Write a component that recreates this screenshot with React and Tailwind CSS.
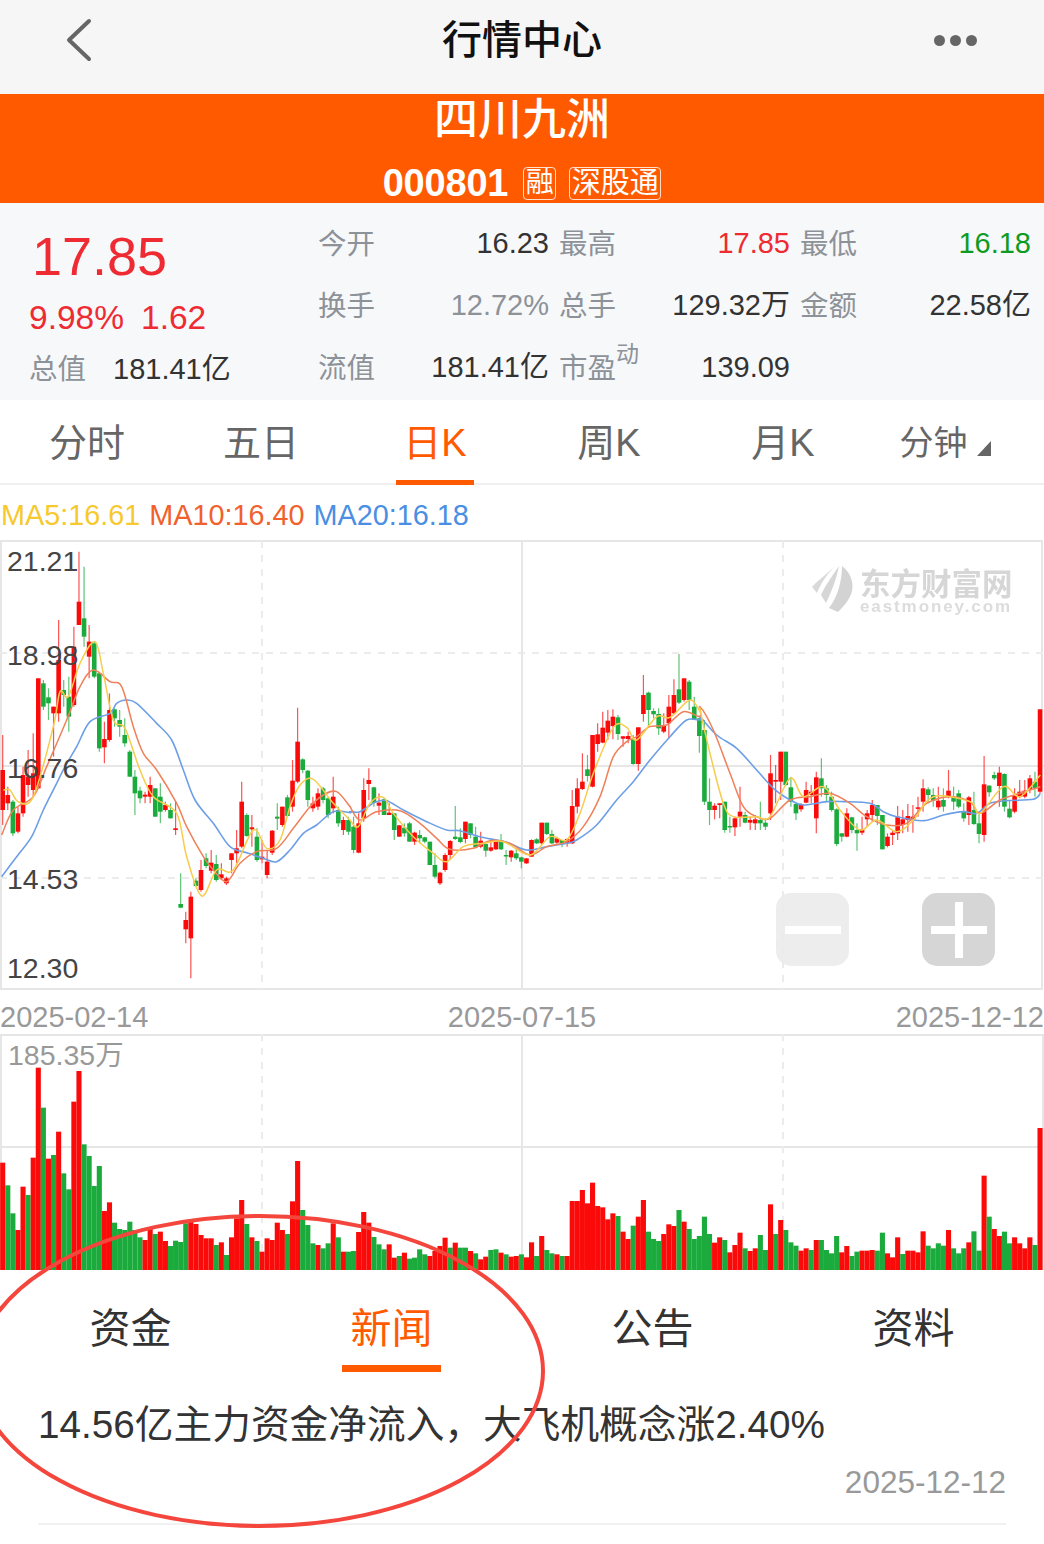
import React from 'react';

const FONT = '"Liberation Sans", "Noto Sans CJK SC", sans-serif';

// candles as [high, bodyTop, bodyBottom, low, up] read off the chart, in zoomed (3x) coordinates
const candlesA = [
  [585,690,810,855,1],[740,765,790,810,1],[780,785,880,888,0],[800,820,875,880,1],[680,705,820,830,1],[630,710,735,770,1],[580,700,750,770,1],[415,415,745,745,1],
  [420,430,500,510,0],[445,472,490,540,0],[500,500,520,650,1],[240,360,520,545,1],[420,450,465,500,0],[410,470,530,575,0],[260,320,495,500,1],[35,185,255,255,1],
  [80,235,290,320,0],[255,305,350,415,1],[305,310,410,415,0],[395,400,625,635,0],[545,597,622,670,1],[460,510,600,605,1],[505,508,535,560,0],[510,540,560,590,0],
  [535,585,610,620,0],[630,635,710,710,0],[690,710,760,825,0],[740,752,775,790,0],[755,764,770,790,1],[710,735,770,790,1],[745,745,830,830,0],[730,770,815,850,0],
  [785,795,810,815,1],[790,810,835,835,0],[785,865,870,885,1],[1000,1092,1103,1105,0],[1115,1140,1168,1210,1],[1055,1070,1195,1315,1],[1015,1022,1038,1040,0],[960,990,1050,1055,1],
  [940,955,978,985,0],[930,968,992,1000,1],[945,972,1020,1025,0],[970,1003,1015,1020,1],[1010,1015,1030,1035,1],[940,940,960,1000,1],[870,925,940,970,1],[725,785,920,925,1],
  [820,825,888,890,0],[825,862,868,920,1],[865,890,960,965,0],[900,950,958,970,1],[930,965,1005,1015,1],[870,872,938,945,1],[790,830,836,870,0],[800,800,855,860,1],
  [765,772,828,830,0],[660,722,800,815,1],[503,605,725,730,1],[655,658,690,700,0],[690,692,780,800,0],[770,790,805,815,1],[745,760,800,810,1],[740,745,780,790,0],
  [770,775,825,835,0],[710,770,805,820,1],[800,810,850,860,0],[830,840,870,885,1],[830,840,875,885,0],
];
const candlesB = [
  [530,560,630,640,0],[520,550,638,640,1],[415,450,535,545,1],[385,420,432,480,1],[440,442,488,500,0],[460,488,497,525,1],[475,478,525,525,0],[490,518,525,525,1],
  [520,520,570,600,0],[555,556,590,590,1],[550,563,580,590,0],[545,550,605,605,0],[575,578,605,615,1],[570,585,595,610,0],[590,592,605,610,0],[605,605,675,675,0],
  [640,675,710,715,0],[695,698,730,735,1],[640,645,690,695,1],[600,603,645,660,1],[498,590,597,600,0],[565,592,606,610,0],[545,545,597,610,1],[550,550,585,595,0],
  [560,590,622,625,0],[575,602,620,625,1],[610,612,632,650,0],[600,622,632,635,1],[600,602,628,630,1],[582,602,628,630,0],[630,645,648,675,0],[630,632,652,665,1],
  [625,640,655,660,0],[650,652,665,685,0],[655,655,670,672,1],[598,600,650,650,1],[595,598,610,612,0],[548,548,610,615,1],[548,548,582,585,0],[570,582,610,612,0],
  [590,595,608,615,1],[600,600,612,622,0],[595,597,610,620,1],[450,498,610,612,1],[415,445,500,520,1],[340,425,447,450,1],[345,388,408,425,0],[285,285,440,442,1],
  [250,283,312,335,1],[215,263,308,310,1],[210,242,278,300,1],[208,230,258,298,1],[225,232,282,300,0],[288,289,296,320,1],[275,288,297,310,1],[285,298,372,374,0],
  [262,262,372,392,1],[105,165,222,245,1],[155,158,210,260,0],[205,213,223,235,0],[205,222,265,285,0],[220,255,275,280,1],[165,200,250,295,1],[118,165,220,225,1],
  [42,148,188,192,0],[115,115,180,185,1],[120,125,180,210,0],[170,200,240,240,0],[235,235,288,338,0],
];
const candlesC = [
  [540,570,785,795,0],[715,785,810,855,0],[790,797,810,838,1],[790,790,795,835,1],[785,785,870,878,0],[830,858,862,878,0],[830,835,862,888,1],[740,815,830,860,1],
  [815,825,848,850,0],[830,840,848,870,1],[825,838,850,870,1],[785,840,850,870,0],[835,848,860,870,0],[645,700,820,840,1],[675,720,725,790,1],[635,635,725,780,1],
  [635,635,735,738,0],[710,742,785,800,0],[790,792,820,840,0],[790,792,808,815,1],[725,750,788,790,1],[735,755,765,790,1],[695,712,835,880,1],[655,715,745,770,0],
  [735,745,765,785,0],[755,770,810,815,0],[805,808,912,918,0],[880,880,890,905,0],[805,820,890,892,1],[830,832,870,880,0],[850,870,880,932,0],[830,868,878,885,1],
  [810,820,838,860,1],[780,795,825,845,1],[795,795,828,855,0],[825,825,928,928,0],[880,890,918,922,1],[870,878,885,915,1],[798,830,880,900,1],[810,838,855,880,1],
  [792,828,840,875,1],[795,830,840,878,1],[770,802,806,830,1],[718,745,785,815,1],[742,748,765,790,0],[745,765,782,800,0],[740,782,802,810,1],[745,780,800,815,0],
  [690,752,770,775,1],[740,772,785,810,0],[750,760,800,805,0],[790,815,835,845,0],[768,772,825,855,1],[755,810,852,855,0],[815,850,882,910,0],[648,733,885,905,1],
  [735,737,757,770,0],[695,705,715,720,0],[680,698,738,800,1],[700,702,800,815,0],[780,806,832,835,0],[745,768,815,820,1],[720,755,770,775,1],[720,752,770,775,1],
  [705,715,750,760,1],[695,725,745,770,0],[508,508,755,760,1],
];

const toY = (off) => (c) => c.slice(0, 4).map((v) => off + v / 3).concat(c[4]);
const candles = [...candlesA.map(toY(540)), ...candlesB.map(toY(640)), ...candlesC.map(toY(540))];

// volume bar tops, red positive and green negative
const volA = [398,-466,-550,600,470,-495,383,113,-233,386,-375,305,-430,-478,215,123,-343,-378,-468,-408,543,517,-578,-597,-600,-575,-600,-622,630,597,-612,605,633,-648,-632,-636,-580,575,582,615,625,625,-645,637,-675,622,565,510,-582,622,-633,665,625,630,578,600,-612,514,393,-540,-585,-640,645,-655,-640,580,-622,665,-665];
const volB = [-155,98,38,70,-113,-135,-150,135,175,-170,160,-178,-175,-150,-165,170,155,140,115,-145,130,-145,-145,155,-162,180,172,-152,-150,160,-165,172,170];
const volC = [-373,382,337,-378,318,-360,-370,373,-378,378,213,213,180,220,158,228,232,268,250,-258,305,327,-287,260,210,-305,-327,-333,312,283,288,-240,275,-297,-327,-318,-260,-312,338,322,-330,367,345,308,-355,363,355,-315,-360,223,-312,270,-300,-337,-347,362,355,-360,330,-330,-360,-370,-318,367,348,-378,-365,362,362,360,-362,-308,370,382,322,-372,362,362,367,304,-347,-355,-340,-347,300,-355,-370,-355,337,-304,-362,137,-260,297,318,-305,-340,322,340,355,322,-345];
const vol = [
  ...volA.map((v) => [(720 - Math.abs(v)) / 3, v > 0]),
  ...volB.map((v) => [(212 - Math.abs(v)) / 3, v > 0]),
  ...volC.map((v) => [(420 - Math.abs(v)) / 3, v > 0]),
  [142, true],
];

const lineParts = {
  ma20: [
    [0, 540, [5,1010,50,950,95,890,130,810,165,740,195,680,230,620,270,545,330,520,350,490,380,480,410,490,470,550,515,600,550,690,585,780,640,850,690,920,740,938,790,955,830,965,870,930,910,880,950,855,1000,815,1050,818]],
    [350, 640, [0,515,30,515,75,487,110,482,160,510,230,545,290,570,330,572,390,590,470,607,530,630,590,620,650,610,680,600,740,555,800,480,850,425,900,360,960,290,1010,240,1050,240]],
    [700, 540, [0,530,50,585,110,625,170,690,220,745,270,780,310,795,380,785,430,785,510,790,550,815,590,830,670,842,730,825,790,815,830,820,870,790,920,782,1000,778,1021,760]],
  ],
  ma10: [
    [0, 540, [5,885,40,810,100,770,140,680,200,540,240,440,280,390,330,425,365,440,400,560,430,640,470,690,530,790,560,860,610,950,640,990,680,1025,720,970,770,935,830,925,880,865,930,800,970,765,1010,755,1050,800]],
    [350, 640, [0,500,30,540,80,515,150,512,210,550,260,595,300,628,370,625,420,602,480,610,540,645,590,620,650,605,700,560,750,470,790,350,830,305,860,290,900,260,950,255,1000,215,1050,230]],
    [700, 540, [0,500,40,570,90,700,130,800,170,830,210,835,270,780,330,770,390,760,450,790,500,830,560,855,620,850,680,790,750,770,810,785,840,820,900,780,960,760,1021,740]],
  ],
  ma5: [
    [0, 540, [10,750,30,750,55,785,100,770,160,560,180,455,205,470,240,370,285,305,310,400,340,540,375,565,420,690,460,770,530,820,560,950,605,1068,650,990,700,990,760,870,800,925,840,900,870,800,900,735,940,718,1000,790,1050,840]],
    [350, 640, [0,540,25,560,60,490,100,472,130,520,190,590,250,640,290,665,340,620,400,610,460,605,540,645,600,590,650,600,690,520,730,400,790,262,830,262,860,300,920,230,960,232,1020,180,1050,215]],
    [700, 540, [0,510,30,640,70,790,100,830,170,830,210,830,270,715,310,770,370,740,420,810,480,870,530,840,590,875,640,840,700,770,810,785,840,820,910,740,960,770,1021,705]],
  ],
};

// smooth line through the points (catmull-rom to bezier)
function smoothPath(parts) {
  const pts = [];
  parts.forEach(([ox, oy, arr]) => {
    for (let i = 0; i < arr.length; i += 2) pts.push([ox + arr[i] / 3, oy + arr[i + 1] / 3]);
  });
  let d = `M${pts[0][0]} ${pts[0][1]}`;
  for (let i = 0; i < pts.length - 1; i++) {
    const p0 = pts[i - 1] || pts[i];
    const p1 = pts[i];
    const p2 = pts[i + 1];
    const p3 = pts[i + 2] || p2;
    d += `C${p1[0] + (p2[0] - p0[0]) / 6} ${p1[1] + (p2[1] - p0[1]) / 6} ${p2[0] - (p3[0] - p1[0]) / 6} ${p2[1] - (p3[1] - p1[1]) / 6} ${p2[0]} ${p2[1]}`;
  }
  return d;
}

const RED = '#fb0a0a';
const GREEN = '#1aab3c';
const barX = (i) => 2.7 + 5.085 * i;

function KChart() {
  return (
    <div className="relative h-[450px]">
      <svg className="block w-full h-full blur-[0.5px]" viewBox="0 540 1044 450">
        <rect x="1" y="541" width="1041" height="448" fill="none" stroke="#e6e6e6" strokeWidth="2" />
        <g stroke="#ececec" strokeWidth="2">
          <line x1="0" y1="653" x2="1044" y2="653" strokeDasharray="7 7" />
          <line x1="0" y1="878" x2="1044" y2="878" strokeDasharray="7 7" />
          <line x1="262" y1="541" x2="262" y2="990" strokeDasharray="7 7" />
          <line x1="783" y1="541" x2="783" y2="990" strokeDasharray="7 7" />
        </g>
        <g stroke="#e6e6e6" strokeWidth="2">
          <line x1="0" y1="766" x2="1044" y2="766" />
          <line x1="522" y1="541" x2="522" y2="990" />
        </g>
        {candles.map((c, i) => {
          const color = c[4] ? RED : GREEN;
          const x = barX(i);
          return (
            <g key={i}>
              <line x1={x} y1={c[0]} x2={x} y2={c[3]} stroke={color} strokeWidth="1.2" opacity="0.7" />
              <rect x={x - 2.3} y={c[1]} width="4.6" height={Math.max(c[2] - c[1], 1.5)} fill={color} />
            </g>
          );
        })}
        <path d={smoothPath(lineParts.ma20)} fill="none" stroke="#6d9fe6" strokeWidth="1.6" />
        <path d={smoothPath(lineParts.ma10)} fill="none" stroke="#f0805a" strokeWidth="1.5" />
        <path d={smoothPath(lineParts.ma5)} fill="none" stroke="#f7cc4c" strokeWidth="1.5" />
      </svg>
      {/* price scale */}
      {[['21.21', 7], ['18.98', 101], ['16.76', 214], ['14.53', 325], ['12.30', 414]].map(([t, top]) => (
        <div key={t} className="absolute left-[7px] text-[28.5px] leading-[28px] text-[#444]" style={{ top }}>{t}</div>
      ))}
      {/* watermark */}
      <div className="absolute left-[812px] top-[26px] flex items-start gap-[6px]">
        <svg width="42" height="46" viewBox="0 0 42 46" className="blur-[0.5px]">
          <path d="M0 21C6 14 14 9 22 1C15 9 10 15 5 27Z" fill="#d9d9d9" />
          <path d="M9 29C13 20 20 10 27 0C25 10 22 20 14 37Z" fill="#d6d6d6" />
          <path d="M17 42C26 31 30 14 30 0C38 6 42 16 40 25C38 34 30 42 26 46Z" fill="#d3d3d3" />
        </svg>
        <div className="flex flex-col items-start">
          <div className="text-[30.5px] leading-[32px] font-bold text-[#d6d6d6] blur-[0.4px]" style={{ fontFamily: '"Noto Sans CJK SC", serif' }}>东方财富网</div>
          <div className="text-[17px] leading-[18px] font-bold tracking-[1.9px] text-[#dcdcdc] blur-[0.3px]">eastmoney.com</div>
        </div>
      </div>
      {/* zoom buttons */}
      <div className="absolute left-[776px] top-[353px] w-[73px] h-[73px] rounded-[15px] bg-[#ebebeb]/90 flex items-center justify-center">
        <div className="w-[56px] h-[8px] bg-white" />
      </div>
      <div className="absolute left-[922px] top-[353px] w-[73px] h-[73px] rounded-[15px] bg-[#d6d6d6] flex items-center justify-center">
        <div className="relative w-[56px] h-[8px] bg-white">
          <div className="absolute left-[24px] top-[-24px] w-[8px] h-[56px] bg-white" />
        </div>
      </div>
    </div>
  );
}

function VolumeChart() {
  return (
    <div className="relative h-[236px]">
      <svg className="block w-full h-full blur-[0.3px]" viewBox="0 1034 1044 236">
        <path d="M1 1270V1035H1043V1270" fill="none" stroke="#e6e6e6" strokeWidth="2" />
        <line x1="0" y1="1147" x2="1044" y2="1147" stroke="#e6e6e6" strokeWidth="2" />
        <line x1="522" y1="1034" x2="522" y2="1270" stroke="#e6e6e6" strokeWidth="2" />
        <line x1="262" y1="1034" x2="262" y2="1270" stroke="#ececec" strokeWidth="2" strokeDasharray="7 7" />
        <line x1="783" y1="1034" x2="783" y2="1270" stroke="#ececec" strokeWidth="2" strokeDasharray="7 7" />
        {vol.map(([h, up], i) => (
          <rect key={i} x={barX(i) - 2.55} y={1270 - h} width="5.1" height={h} fill={up ? RED : GREEN} />
        ))}
      </svg>
      <div className="absolute left-[8px] top-[7px] text-[28.5px] leading-[28px] text-[#999]">185.35万</div>
    </div>
  );
}

function QuoteRow({ items }) {
  return (
    <div className="flex items-center h-[62px]">
      {items.map(([label, value, color, sup], i) => (
        <React.Fragment key={label}>
          <div className={`relative w-[57px] shrink-0 text-[28.5px] text-[#8d9299] ${i === 0 ? '' : 'ml-[10px]'}`}>
            {label}
            {sup && <span className="absolute left-[57px] top-[-6px] text-[23px] leading-[26px]">{sup}</span>}
          </div>
          <div className={`w-[174px] shrink-0 text-right text-[29px] ${color}`}>{value}</div>
        </React.Fragment>
      ))}
    </div>
  );
}

export default function App() {
  return (
    <div className="relative w-[1044px] h-[1544px] overflow-hidden bg-white" style={{ fontFamily: FONT }}>
      {/* Header */}
      <header className="relative h-[94px] bg-[#f6f6f6] flex items-start justify-center pt-[17px]">
        <svg className="absolute left-[60px] top-[15px]" width="36" height="50" viewBox="0 0 36 50">
          <path d="M29 6L9 25L29 44" fill="none" stroke="#666" strokeWidth="4" strokeLinecap="round" strokeLinejoin="round" />
        </svg>
        <h1 className="text-[40px] leading-[46px] font-medium text-[#111]">行情中心</h1>
        <div className="absolute left-[934px] top-[35px] flex gap-[5px]">
          <span className="w-[11px] h-[11px] rounded-full bg-[#666]" />
          <span className="w-[11px] h-[11px] rounded-full bg-[#666]" />
          <span className="w-[11px] h-[11px] rounded-full bg-[#666]" />
        </div>
      </header>

      {/* Stock title */}
      <section className="h-[109px] bg-[#ff5a00] flex flex-col items-center text-white">
        <div className="text-[44px] leading-[52px] font-medium">四川九洲</div>
        <div className="flex items-center mt-[15px]">
          <span className="text-[38px] leading-[44px] font-bold tracking-[-0.2px]">000801</span>
          <span className="ml-[15px] w-[33px] h-[33px] border border-white/80 rounded-[4px] text-[28px] leading-[30px] text-center">融</span>
          <span className="ml-[13px] w-[92px] h-[33px] border border-white/80 rounded-[4px] text-[29px] leading-[30px] text-center whitespace-nowrap">深股通</span>
        </div>
      </section>

      {/* Quote */}
      <section className="h-[197px] bg-[#f7f8fa] flex">
        <div className="w-[318px] shrink-0 pl-[29px] pt-[22px]">
          <div className="pl-[3px] text-[54px] leading-[62px] text-[#ee2b33]">17.85</div>
          <div className="flex gap-[17px] text-[33.5px] leading-[40px] text-[#ee2b33] mt-[11px]">
            <span>9.98%</span>
            <span>1.62</span>
          </div>
          <div className="flex items-center mt-[11px]">
            <span className="w-[84px] text-[28.5px] leading-[40px] text-[#8d9299]">总值</span>
            <span className="text-[29px] leading-[40px] text-[#333]">181.41亿</span>
          </div>
        </div>
        <div className="pt-[10px]">
          <QuoteRow items={[['今开', '16.23', 'text-[#333]'], ['最高', '17.85', 'text-[#ee2b33]'], ['最低', '16.18', 'text-[#0f9b1f]']]} />
          <QuoteRow items={[['换手', '12.72%', 'text-[#8d9299]'], ['总手', '129.32万', 'text-[#333]'], ['金额', '22.58亿', 'text-[#333]']]} />
          <QuoteRow items={[['流值', '181.41亿', 'text-[#333]'], ['市盈', '139.09', 'text-[#333]', '动']]} />
        </div>
      </section>

      {/* Period tabs */}
      <nav className="grid grid-cols-6 h-[85px] border-b-2 border-[#efefef] bg-white text-[#666] text-[38px]">
        <div className="flex items-center justify-center pt-[3px]">分时</div>
        <div className="flex items-center justify-center pt-[3px]">五日</div>
        <div className="relative flex items-center justify-center pt-[3px] text-[#ff5a00]">
          日K
          <span className="absolute left-[48px] bottom-[-2px] w-[78px] h-[5px] bg-[#ff5a00]" />
        </div>
        <div className="flex items-center justify-center pt-[3px]">周K</div>
        <div className="flex items-center justify-center pt-[3px]">月K</div>
        <div className="flex items-center justify-center pt-[3px] pr-[24px] text-[34px]">
          分钟
          <svg className="ml-[9px] mt-[10px]" width="14" height="15" viewBox="0 0 14 15">
            <path d="M14 0V15H0Z" fill="#666" />
          </svg>
        </div>
      </nav>

      {/* MA legend */}
      <div className="flex h-[55px] items-center gap-[9px] pl-[1px] pt-[6px] text-[28.8px]">
        <span className="text-[#f6c92e]">MA5:16.61</span>
        <span className="text-[#f0612c]">MA10:16.40</span>
        <span className="text-[#4a8fe3]">MA20:16.18</span>
      </div>

      <KChart />

      {/* Date axis */}
      <div className="flex h-[44px] items-end justify-between pb-[-1px] text-[29px] leading-[34px] text-[#999]">
        <span>2025-02-14</span>
        <span>2025-07-15</span>
        <span>2025-12-12</span>
      </div>

      <VolumeChart />

      {/* News tabs */}
      <nav className="grid grid-cols-4 h-[102px] text-[41px] text-[#333]">
        <div className="flex items-center justify-center pt-[18px]">资金</div>
        <div className="relative flex items-center justify-center pt-[18px] text-[#ff5a00]">
          新闻
          <span className="absolute left-[81px] bottom-0 w-[99px] h-[7px] bg-[#ff5a00]" />
        </div>
        <div className="flex items-center justify-center pt-[18px]">公告</div>
        <div className="flex items-center justify-center pt-[18px]">资料</div>
      </nav>

      {/* News item */}
      <article className="mx-[38px] h-[153px] border-b-2 border-[#f1f1f1] pt-[30px]">
        <div className="text-[38.7px] leading-[46px] text-[#333] whitespace-nowrap">14.56亿主力资金净流入，大飞机概念涨2.40%</div>
        <div className="mt-[15px] text-right text-[31.5px] leading-[38px] text-[#999]">2025-12-12</div>
      </article>

      {/* Hand-drawn circle on top of the screenshot */}
      <svg className="absolute inset-0 pointer-events-none" width="1044" height="1544" viewBox="0 0 1044 1544">
        <ellipse cx="260" cy="1371" rx="283" ry="155" fill="none" stroke="#f4463c" strokeWidth="4" />
      </svg>
    </div>
  );
}
